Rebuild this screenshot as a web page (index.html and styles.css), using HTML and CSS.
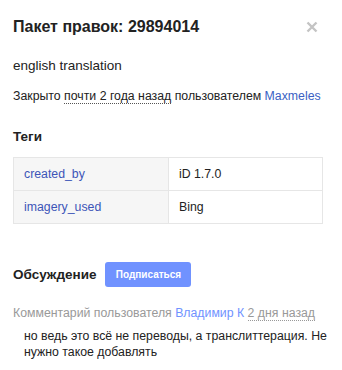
FILE: index.html
```html
<!DOCTYPE html>
<html lang="ru">
<head>
    <meta charset="UTF-8">
    <title>Пакет правок: 29894014</title>
    <link rel="stylesheet" href="styles.css">
</head>
<body>
    <div class="panel">
        <div class="header">
            <h2>Пакет правок: 29894014</h2>
            <span class="close">
                <svg width="12" height="12" viewBox="0 0 12 12"><path d="M1.5 1.5 L10.5 10.5 M10.5 1.5 L1.5 10.5" stroke="#c4c4c4" stroke-width="2.4"/></svg>
            </span>
        </div>
        <p class="comment-title">english translation</p>
        <p class="meta">Закрыто <span class="dotted">почти 2 года назад</span> пользователем <a href="#">Maxmeles</a></p>

        <h3>Теги</h3>
        <table class="tags">
            <tr><td class="key">created_by</td><td>iD 1.7.0</td></tr>
            <tr><td class="key">imagery_used</td><td>Bing</td></tr>
        </table>

        <div class="discussion">
            <h3>Обсуждение</h3>
            <button>Подписаться</button>
        </div>

        <div class="comment">
            <div class="comment-head">Комментарий пользователя <a href="#">Владимир К</a> <span class="dotted">2 дня назад</span></div>
            <div class="comment-text">но ведь это всё не переводы, а транслиттерация. Не нужно такое добавлять</div>
        </div>
    </div>
</body>
</html>
```

FILE: styles.css
```css
body {
    margin: 0;
    background: #fff;
    font-family: "Liberation Sans", Arial, sans-serif;
    color: #222;
}
.panel {
    padding: 0 20px 0 13px;
}
.header {
    display: flex;
    justify-content: space-between;
    align-items: center;
    height: 53px;
}
.header h2 {
    margin: 0;
    font-size: 16px;
    font-weight: bold;
}
.close {
    display: flex;
    margin-right: 4px;
}
a {
    color: #3a5fc4;
    text-decoration: none;
}
.comment-title {
    margin: 5px 0 0;
    font-size: 13.5px;
}
.meta {
    margin: 16px 0 0;
    font-size: 12.3px;
}
.dotted {
    border-bottom: 1px dotted #555;
}
h3 {
    margin: 26px 0 0;
    font-size: 13.5px;
    font-weight: bold;
}
.tags {
    margin-top: 13px;
    width: 310px;
    border-collapse: collapse;
    font-size: 12.3px;
}
.tags td {
    border: 1px solid #e6e6e6;
    height: 32px;
    padding: 0 10px;
}
.tags td.key {
    width: 134px;
    background: #f6f6f6;
    color: #3d55b8;
}
.discussion {
    display: flex;
    align-items: center;
    gap: 9px;
    margin-top: 38px;
}
.discussion h3 {
    margin: 0;
}
button {
    background: #7092ff;
    color: #fff;
    border: none;
    border-radius: 3px;
    font-family: inherit;
    font-size: 10px;
    font-weight: bold;
    width: 86px;
    height: 25px;
    padding: 0;
}
.comment {
    margin-top: 19px;
    font-size: 12.3px;
}
.comment-head {
    color: #999;
}
.comment-head .dotted {
    border-bottom-color: #999;
}
.comment-head a {
    color: #7092ff;
}
.comment-text {
    padding-left: 11px;
    margin: 8px -10px 0 0;
    line-height: 16px;
    color: #222;
}
```
